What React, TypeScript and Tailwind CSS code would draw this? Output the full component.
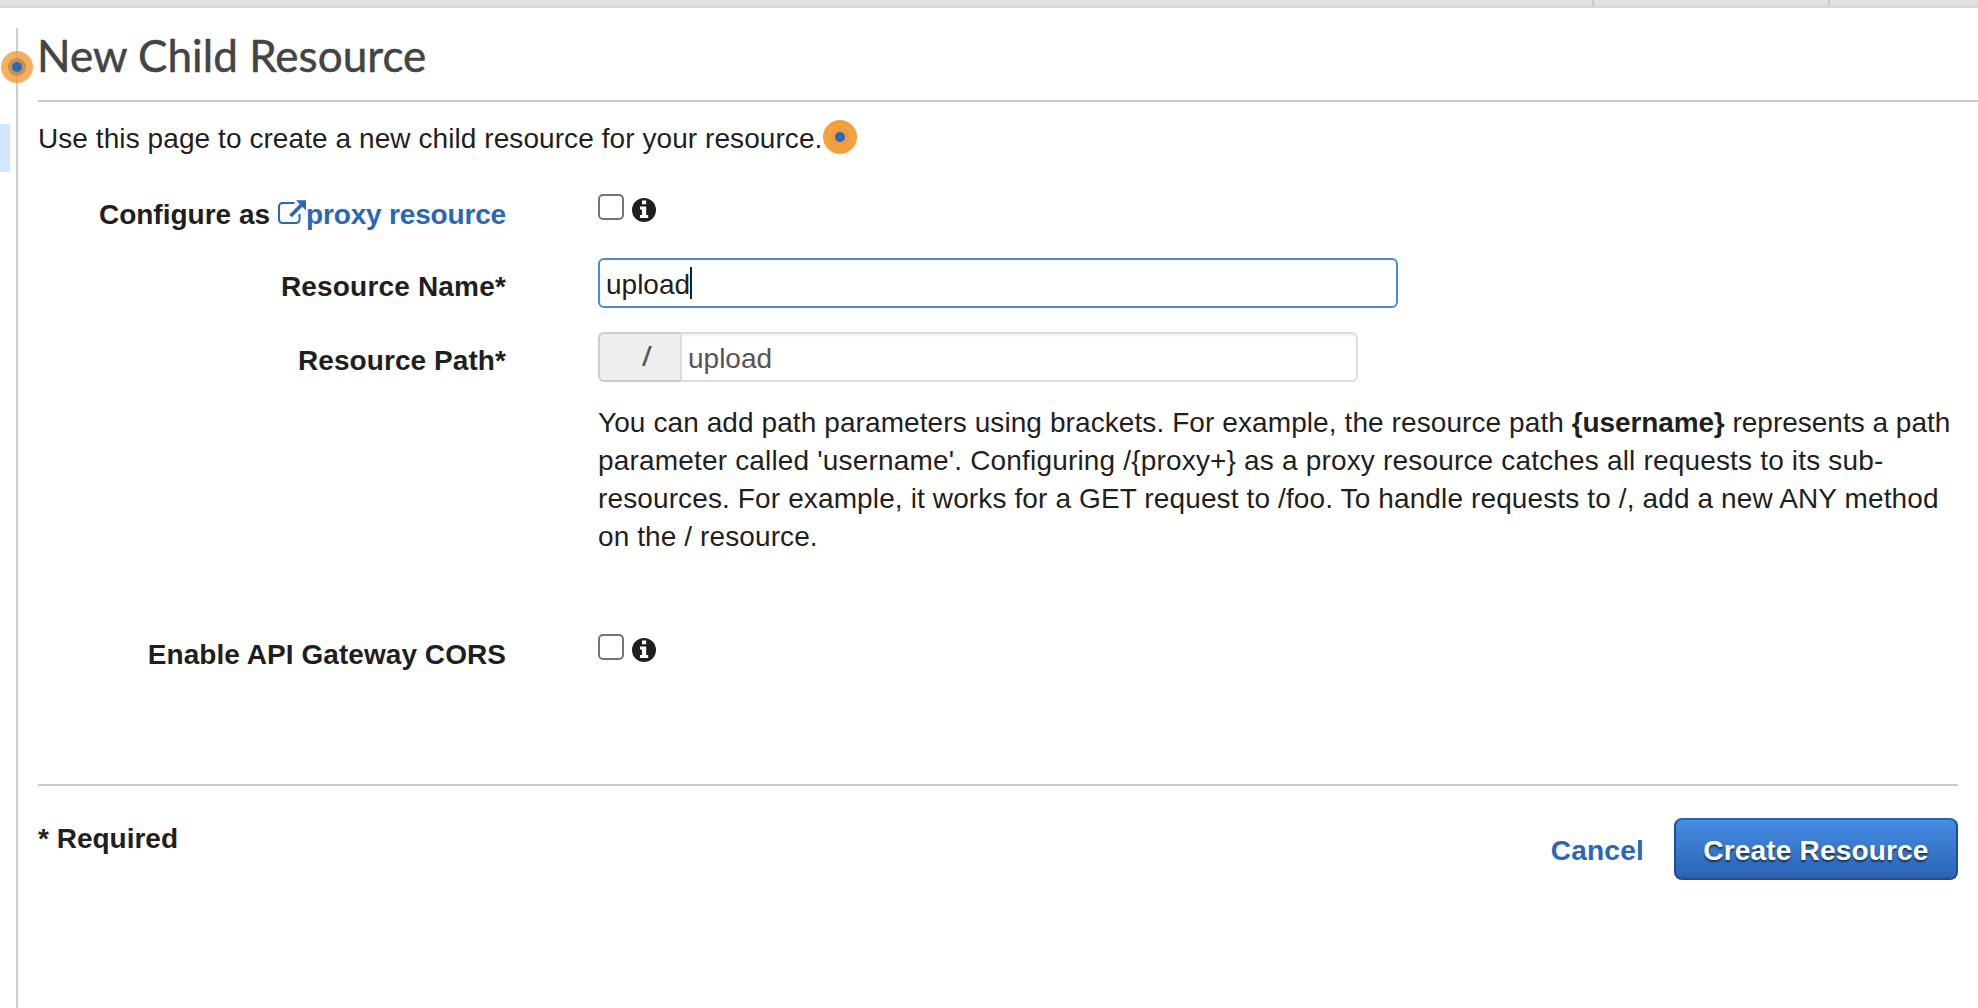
import React from "react";

function TopBar() {
  return (
    <div className="flex h-2 shrink-0 border-b-2 border-[#d6d6d6] bg-[#e0e0e0]">
      <div className="w-[1592px]" />
      <div className="w-[238px] border-x-2 border-[#cacaca]" />
    </div>
  );
}

function InfoIcon() {
  return (
    <svg viewBox="0 0 24 24" className="mt-1 size-6">
      <circle cx="12" cy="12" r="12" fill="#1f1f1f" />
      <path d="M10 2.5h4.2v3.8H10zM8 8.5h6.2v8.5H16.2v2.9H8V17h2v-5.6H8z" fill="#fff" />
    </svg>
  );
}

function ExternalIcon() {
  return (
    <svg viewBox="0 0 29 25" className="mr-px h-[25px] w-[29px] shrink-0" fill="none">
      <path
        d="M16.5 3H4.500A3.500 3.500 0 0 0 1 6.500V19.500A3.500 3.500 0 0 0 4.500 23H18A3.500 3.500 0 0 0 21.500 19.500V14"
        stroke="#2a67b7"
        strokeWidth="2"
      />
      <path d="M12.500 16 23.500 5" stroke="#2a67b7" strokeWidth="3.800" />
      <path d="M18 0.300H28V10.600z" fill="#2a67b7" />
    </svg>
  );
}

function Row({
  label,
  labelClass,
  className,
  children,
}: {
  label: React.ReactNode;
  labelClass: string;
  className: string;
  children: React.ReactNode;
}) {
  return (
    <div className={`flex gap-[92px] ${className}`}>
      <div className={`flex h-fit w-[468px] shrink-0 justify-end font-bold ${labelClass}`}>{label}</div>
      <div className="min-w-0 flex-1">{children}</div>
    </div>
  );
}

function CheckboxWithInfo() {
  return (
    <div className="flex gap-[7.5px]">
      <input
        type="checkbox"
        className="size-[26px] appearance-none rounded-[5px] border-2 border-[#757575] bg-white"
      />
      <InfoIcon />
    </div>
  );
}

export default function App() {
  return (
    <div className="relative flex h-[1008px] w-[1978px] flex-col overflow-hidden bg-white font-['Liberation_Sans',Arial,sans-serif] text-[28px] leading-[38px] text-[#1f1f1f]">
      <TopBar />
      <div className="flex flex-1">
        <aside className="w-4 shrink-0 pt-[116px]">
          <div className="h-12 w-2.5 bg-[#d3e8fd]" />
        </aside>
        <div className="mt-5 w-0.5 shrink-0 bg-[#ccc]" />
        <main className="min-w-0 flex-1 pl-5">
          <h1 className="h-[94px] border-b-2 border-[#ccc] pt-[15px] font-['Lato',sans-serif] text-[44px] leading-[64px] font-normal tracking-[0.05px] text-[#444] [-webkit-text-stroke:0.5px_#444]">
            <span className="-ml-px">New Child Resource</span>
          </h1>

          <div className="mt-[17px] flex">
            <p className="pt-px tracking-[0.075px] whitespace-nowrap">
              Use this page to create a new child resource for your resource.
            </p>
            <span className="mt-px ml-[1px] flex size-[34px] items-center justify-center rounded-full bg-[#f2a040]">
              <span className="flex size-[18px] items-center justify-center rounded-full bg-[#ee9c3e]">
                <span className="size-2.5 rounded-full bg-[#2a67b7]" />
              </span>
            </span>
          </div>

          <Row
            className="mt-9 h-16"
            labelClass="pt-0.5"
            label={
              <>
                <span className="mr-2">Configure as</span>
                <a className="flex pt-1 text-[#2a67b7]">
                  <ExternalIcon />
                  <span className="-mt-1 -ml-0.5 tracking-[-0.17px]">proxy resource</span>
                </a>
              </>
            }
          >
            <CheckboxWithInfo />
          </Row>

          <Row
            className="h-[74px]"
            labelClass="pt-2.5"
            label={<span className="tracking-[0.18px]">Resource Name*</span>}
          >
            <div className="flex h-[50px] w-[800px] items-center rounded-md border-2 border-[#4a89dc] pl-1.5">
              <span className="pt-[3px]">upload</span>
              <span className="-mt-px h-8 w-0.5 bg-[#1f1f1f]" />
            </div>
          </Row>

          <Row
            className=""
            labelClass="pt-2.5"
            label={<span className="tracking-[0.07px]">Resource Path*</span>}
          >
            <div className="flex h-[50px] w-[760px] text-[#555]">
              <div className="w-[82px] rounded-l-md border-2 border-r-0 border-[#ccc] bg-[#eee] pt-1 pl-[43px]">
                <span className="inline-block scale-x-125">/</span>
              </div>
              <div className="flex-1 rounded-r-md border-2 border-[#ddd] pt-1.5 pl-1.5 shadow-[inset_0_2px_2px_rgba(0,0,0,0.06)]">
                upload
              </div>
            </div>
            <p className="mt-[22px] whitespace-nowrap">
              <span className="tracking-[0.09px]">
                You can add path parameters using brackets. For example, the resource path{" "}
              </span>
              <b className="tracking-[-0.13px]">{"{username}"}</b>
              <span> represents a path</span>
              <br />
              <span className="tracking-[0.175px]">
                parameter called 'username'. Configuring /{"{proxy+}"} as a proxy resource catches all requests to its sub-
              </span>
              <br />
              <span className="tracking-[0.125px]">
                resources. For example, it works for a GET request to /foo. To handle requests to /, add a new ANY method
              </span>
              <br />
              <span className="tracking-[0.1px]">on the / resource.</span>
            </p>
          </Row>

          <Row
            className="mt-[78px] h-[150px]"
            labelClass="pt-0.5"
            label={<span className="tracking-[0.06px]">Enable API Gateway CORS</span>}
          >
            <CheckboxWithInfo />
          </Row>

          <footer className="mr-5 flex justify-between border-t-2 border-[#ccc] pt-8 font-bold">
            <span className="pt-0.5">* Required</span>
            <div className="flex items-start gap-[30px]">
              <a className="pt-3.5 tracking-[0.25px] text-[#2a67b7]">Cancel</a>
              <button className="h-[62px] w-[284px] rounded-lg border-2 border-[#1f4e8e] border-t-[#2a62b0] bg-linear-to-b from-[#478ee5] to-[#2a63b3] pt-[3px] font-bold tracking-[0.18px] whitespace-nowrap text-white [text-shadow:0_2px_2px_#1a2f4d]">
                Create Resource
              </button>
            </div>
          </footer>
        </main>
      </div>

      {/* Guide marker pinned over the sidebar divider */}
      <span className="absolute top-[51px] left-px flex size-8 items-center justify-center rounded-full bg-[#f39b34]/80">
        <span className="flex size-[18px] items-center justify-center rounded-full bg-[#c29156]">
          <span className="size-2.5 rounded-full bg-[#2a67b7]" />
        </span>
      </span>
    </div>
  );
}
